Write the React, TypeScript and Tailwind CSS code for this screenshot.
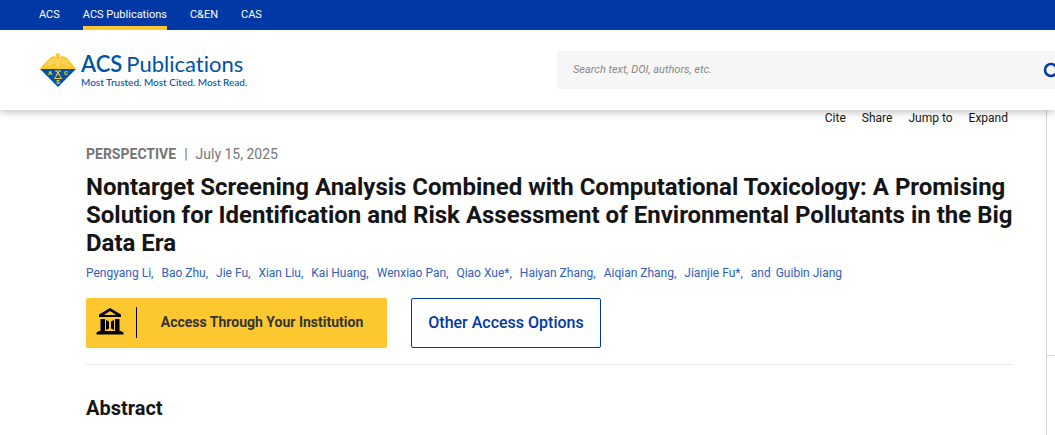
import { Fragment } from 'react';

const siteLinks = ['ACS', 'ACS Publications', 'C&EN', 'CAS'];
const tools = ['Cite', 'Share', 'Jump to', 'Expand'];
const authors = [
  'Pengyang Li',
  'Bao Zhu',
  'Jie Fu',
  'Xian Liu',
  'Kai Huang',
  'Wenxiao Pan',
  'Qiao Xue*',
  'Haiyan Zhang',
  'Aiqian Zhang',
  'Jianjie Fu*',
];

function AcsEmblem() {
  return (
    <svg width="36" height="34" viewBox="0 0 36 34" className="shrink-0" aria-hidden="true">
      <path d="M0 16 L3 12 L11 4 L14 3 L16 4 V1 L18 0 L20 1 V4 L22 3 L26 4 L33 12 L36 16 Z" fill="#fdc82f" />
      <path d="M8 10 L15 6 M6 13 L15 9 M28 10 L21 6 M30 13 L21 9 M16 5 L18 14 L20 5" stroke="#fbe29a" strokeWidth="1" fill="none" />
      <path d="M0 16 H36 L18 34 Z" fill="#0054a6" />
      <path d="M15 18 H21 M16 18 L20 22 M20 18 L16 22 M18 20 L14.500 25.500 H21.500 Z" stroke="#fdc82f" strokeWidth="1" fill="none" />
      <g fill="#fdc82f" fontFamily="Roboto, sans-serif" fontSize="6" fontWeight="900" textAnchor="middle">
        <text x="10" y="22">A</text>
        <text x="26" y="22">C</text>
        <text x="18" y="31">S</text>
      </g>
    </svg>
  );
}

function InstitutionIcon() {
  return (
    <svg width="28" height="28" viewBox="0 0 28 28" className="shrink-0" aria-hidden="true">
      <path d="M14 0 L25 6.500 V9 H3 V6.500 Z M14 3 L8 7 H20 Z" fill="#000" fillRule="evenodd" />
      <path d="M4.500 11 H9 V23 H4.500 Z M19 11 H23.500 V23 H19 Z" fill="#000" />
      <path d="M10 12 L13 13.500 V20.500 L10 22 Z M18 12 L15 13.500 V20.500 L18 22 Z" fill="#000" />
      <path d="M3 23 H25 L27.500 24.500 V26.500 H.5 V24.500 Z" fill="#000" />
    </svg>
  );
}

export default function App() {
  return (
    <div className="flex min-h-screen flex-col overflow-hidden bg-white font-['Roboto',sans-serif] text-[#151515]">
      <header className="relative z-10 bg-white shadow-[0_2px_8px_rgba(0,0,0,0.25)]">
        <nav className="flex h-[30px] gap-[23px] bg-[#0039a6] pl-[39px] text-[11px] text-white">
          {siteLinks.map((name) => (
            <a
              key={name}
              href="#"
              className={
                name === 'ACS Publications'
                  ? 'border-b-4 border-[#fdc82f] leading-[29px]'
                  : 'leading-[29px]'
              }
            >
              {name}
            </a>
          ))}
        </nav>
        <div className="flex h-20 items-center justify-between pl-10">
          <a href="#" className="flex items-center gap-[5px] text-[#0054a6]">
            <AcsEmblem />
            <span className="flex flex-col whitespace-nowrap font-['Lato',sans-serif] [font-variant-ligatures:none]">
              <span className="flex gap-1 text-[22px] leading-6">
                <span className="font-semibold">ACS</span>
                <span>Publications</span>
              </span>
              <span className="text-[10px] font-medium leading-3">Most Trusted. Most Cited. Most Read.</span>
            </span>
          </a>
          <form className="flex h-[38px] w-[498px] items-center overflow-hidden bg-[#f6f6f6] pl-4">
            <input
              type="text"
              aria-label="Search"
              placeholder="Search text, DOI, authors, etc."
              className="min-w-0 flex-1 bg-transparent text-[11px] italic outline-none placeholder:text-[#888]"
            />
            <button type="button" aria-label="Search articles" className="w-3 shrink-0">
              <svg width="20" height="20" viewBox="0 0 20 20" fill="none" stroke="#0039a6" strokeWidth="2.500" className="max-w-none">
                <circle cx="8" cy="10" r="6" />
                <path d="M12.500 14.500 L18 19" />
              </svg>
            </button>
          </form>
        </div>
      </header>

      <main className="flex flex-1">
        <article className="min-w-0 flex-1 border-r border-[#d2d2d2] pr-8 pl-[86px]">
          <div className="flex justify-end gap-4 pr-[6px] text-xs leading-4">
            {tools.map((name) => (
              <button key={name} type="button">
                {name}
              </button>
            ))}
          </div>
          <p className="mt-[18px] flex gap-2 text-sm text-[#757575]">
            <span className="font-bold">PERSPECTIVE</span>
            <span>|</span>
            <time dateTime="2025-07-15">July 15, 2025</time>
          </p>
          <h1 className="mt-[9px] text-2xl font-bold leading-7">
            Nontarget Screening Analysis Combined with Computational Toxicology: A Promising Solution for
            Identification and Risk Assessment of Environmental Pollutants in the Big Data Era
          </h1>
          <p className="mt-2 text-xs text-[#2f60bb]">
            {authors.map((name) => (
              <Fragment key={name}>
                <a href="#" className="mr-[5px]">
                  {name},
                </a>{' '}
              </Fragment>
            ))}
            <span className="mr-[2px]">and</span> <a href="#">Guibin Jiang</a>
          </p>
          <div className="mt-[17px] flex gap-6">
            <button
              type="button"
              className="flex h-[50px] w-[301px] items-center rounded-xs bg-[#fdc82f] pb-[2px] pl-[10px] text-sm font-bold text-[#333]"
            >
              <InstitutionIcon />
              <span className="ml-3 h-[31px] w-px bg-black" />
              <span className="flex-1 text-center">Access Through Your Institution</span>
            </button>
            <button
              type="button"
              className="h-[50px] w-[190px] rounded-xs border border-[#0039a6] text-base font-medium text-[#0039a6]"
            >
              Other Access Options
            </button>
          </div>
          <hr className="mt-4 border-[#ececec]" />
          <h2 className="mt-[29px] text-xl font-bold">Abstract</h2>
        </article>
        <aside className="w-2 shrink-0 pt-[245px]">
          <hr className="border-[#d2d2d2]" />
        </aside>
      </main>
    </div>
  );
}
